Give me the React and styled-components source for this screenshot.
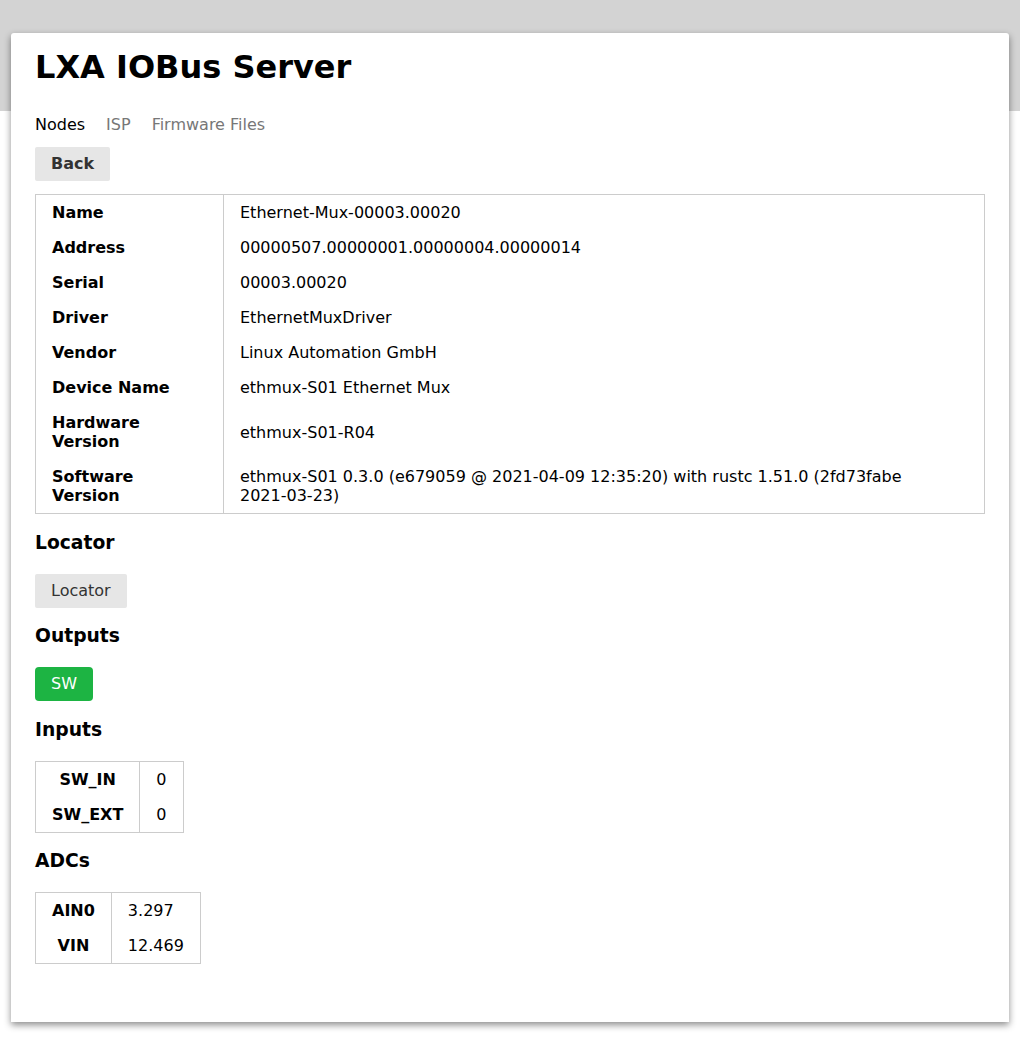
import React from 'react';
import styled, { createGlobalStyle } from 'styled-components';

const GlobalStyle = createGlobalStyle`
  body {
    margin: 0;
    background: #fff;
    font-family: "DejaVu Sans", "Liberation Sans", sans-serif;
    color: #000;
  }
`;

const Page = styled.div`
  min-height: 1061px;
  box-sizing: border-box;
  padding: 33px 11px 40px;
  background: linear-gradient(#d3d3d3 0, #d3d3d3 111px, #fff 111px);
`;

const Card = styled.main`
  background: #fff;
  border-radius: 3px 3px 0 0;
  box-shadow: 0 3px 7px rgba(0, 0, 0, 0.45);
  padding: 16px 24px 58px;
`;

const Title = styled.h1`
  margin: 0;
  font-size: 32px;
  line-height: 37px;
  font-weight: bold;
`;

const Tabs = styled.nav`
  display: flex;
  gap: 21px;
  margin-top: 29px;
  font-size: 16px;
  line-height: 19px;
`;

const Tab = styled.a`
  color: ${(p) => (p.$active ? '#000' : '#777')};
  text-decoration: none;
  cursor: pointer;
`;

const ButtonRow = styled.div`
  display: flex;
  margin-top: ${(p) => (p.$top ? '13px' : '0')};
`;

const Button = styled.button`
  display: block;
  box-sizing: border-box;
  height: 34px;
  border: none;
  border-radius: ${(p) => (p.$green ? '4px' : '2px')};
  background: ${(p) => (p.$green ? '#1db443' : '#e6e6e6')};
  color: ${(p) => (p.$green ? '#fff' : '#333')};
  font-family: inherit;
  font-size: 16px;
  font-weight: ${(p) => (p.$bold ? 'bold' : 'normal')};
  line-height: 20px;
  padding: 7px 16px;
  cursor: pointer;
`;

const Table = styled.table`
  border-collapse: collapse;
  border: 1px solid #ccc;
  width: ${(p) => (p.$full ? '100%' : 'auto')};
  margin-top: ${(p) => (p.$full ? '13px' : '0')};
  font-size: 16px;
  line-height: 19px;

  th {
    text-align: ${(p) => (p.$full ? 'left' : 'center')};
    font-weight: bold;
    padding: ${(p) => (p.$full ? '8px 23px 8px 16px' : '8px 16px')};
    border-right: 1px solid #ccc;
    width: ${(p) => (p.$full ? '148px' : 'auto')};
  }

  td {
    padding: 8px 16px;
    text-align: left;
  }
`;

const Word = styled.span`
  white-space: nowrap;
`;

const Heading = styled.h3`
  font-size: 18.72px;
  line-height: 22px;
  font-weight: bold;
  margin: 17.5px 0 20px;
`;

const info = [
  ['Name', 'Ethernet-Mux-00003.00020'],
  ['Address', '00000507.00000001.00000004.00000014'],
  ['Serial', '00003.00020'],
  ['Driver', 'EthernetMuxDriver'],
  ['Vendor', 'Linux Automation GmbH'],
  ['Device Name', 'ethmux-S01 Ethernet Mux'],
  ['Hardware Version', 'ethmux-S01-R04'],
  ['Software Version', 'ethmux-S01 0.3.0 (e679059 @ 2021-04-09 12:35:20) with rustc 1.51.0 (2fd73fabe 2021-03-23)'],
];

const inputs = [
  ['SW_IN', '0'],
  ['SW_EXT', '0'],
];

const adcs = [
  ['AIN0', '3.297'],
  ['VIN', '12.469'],
];

// keep each word whole, only break on spaces
const words = (text) =>
  text.split(' ').map((w, i, all) => (
    <React.Fragment key={i}>
      <Word>{w}</Word>
      {i < all.length - 1 ? ' ' : null}
    </React.Fragment>
  ));

const KeyTable = ({ rows, full }) => (
  <Table $full={full}>
    <tbody>
      {rows.map(([k, v]) => (
        <tr key={k}>
          <th>{k}</th>
          <td>{words(v)}</td>
        </tr>
      ))}
    </tbody>
  </Table>
);

const App = () => {
  return (
    <Page>
      <GlobalStyle />
      <Card>
        <Title>LXA IOBus Server</Title>
        <Tabs>
          <Tab $active>Nodes</Tab>
          <Tab>ISP</Tab>
          <Tab>Firmware Files</Tab>
        </Tabs>
        <ButtonRow $top>
          <Button $bold>Back</Button>
        </ButtonRow>
        <KeyTable rows={info} full />

        <Heading>Locator</Heading>
        <ButtonRow>
          <Button>Locator</Button>
        </ButtonRow>

        <Heading>Outputs</Heading>
        <ButtonRow>
          <Button $green>SW</Button>
        </ButtonRow>

        <Heading>Inputs</Heading>
        <KeyTable rows={inputs} />

        <Heading>ADCs</Heading>
        <KeyTable rows={adcs} />
      </Card>
    </Page>
  );
};

export default App;
